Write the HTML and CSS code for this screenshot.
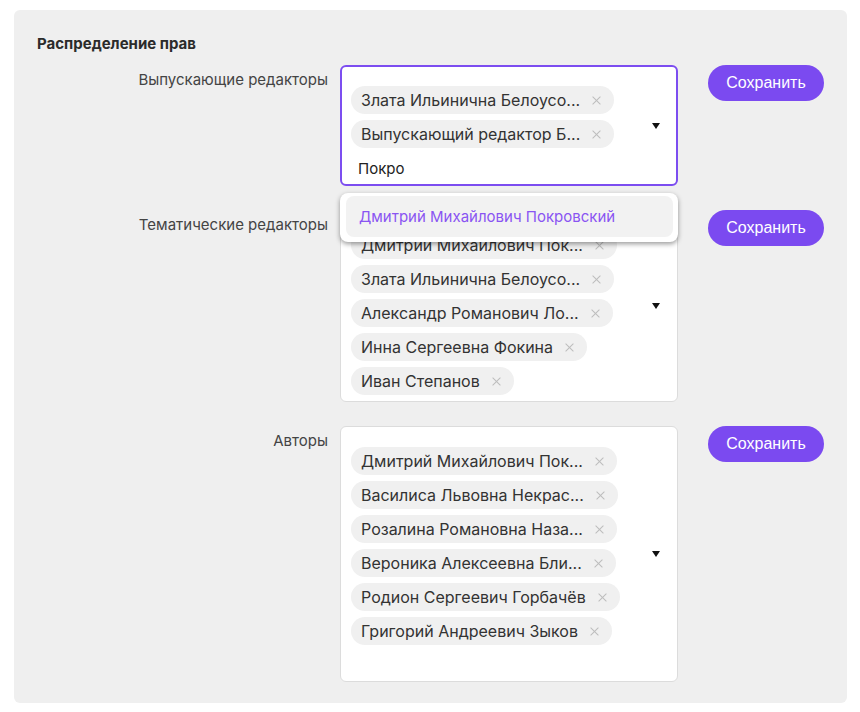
FILE: index.html
```html
<!DOCTYPE html>
<html lang="ru">
<head>
<meta charset="utf-8">
<title>Распределение прав</title>
<link rel="stylesheet" href="styles.css">
</head>
<body>
<section class="card">
  <h2 class="title">Распределение прав</h2>

  <div class="row">
    <div class="label">Выпускающие редакторы</div>
    <div class="field">
      <div class="select focused">
        <div class="values">
          <span class="chip"><span class="chip-text">Злата Ильинична Белоусо...</span><span class="x"></span></span>
          <span class="chip"><span class="chip-text">Выпускающий редактор Б...</span><span class="x"></span></span>
          <div class="input">Покро</div>
        </div>
        <span class="caret"></span>
      </div>
      <div class="menu">
        <div class="option">Дмитрий Михайлович Покровский</div>
      </div>
    </div>
    <button class="save">Сохранить</button>
  </div>

  <div class="row">
    <div class="label">Тематические редакторы</div>
    <div class="field">
      <div class="select">
        <div class="values">
          <span class="chip"><span class="chip-text">Дмитрий Михайлович Пок...</span><span class="x"></span></span>
          <span class="chip"><span class="chip-text">Злата Ильинична Белоусо...</span><span class="x"></span></span>
          <span class="chip"><span class="chip-text">Александр Романович Ло...</span><span class="x"></span></span>
          <span class="chip"><span class="chip-text">Инна Сергеевна Фокина</span><span class="x"></span></span>
          <span class="chip"><span class="chip-text">Иван Степанов</span><span class="x"></span></span>
        </div>
        <span class="caret"></span>
      </div>
    </div>
    <button class="save">Сохранить</button>
  </div>

  <div class="row">
    <div class="label">Авторы</div>
    <div class="field">
      <div class="select">
        <div class="values">
          <span class="chip"><span class="chip-text">Дмитрий Михайлович Пок...</span><span class="x"></span></span>
          <span class="chip"><span class="chip-text">Василиса Львовна Некрас...</span><span class="x"></span></span>
          <span class="chip"><span class="chip-text">Розалина Романовна Наза...</span><span class="x"></span></span>
          <span class="chip"><span class="chip-text">Вероника Алексеевна Бли...</span><span class="x"></span></span>
          <span class="chip"><span class="chip-text">Родион Сергеевич Горбачёв</span><span class="x"></span></span>
          <span class="chip"><span class="chip-text">Григорий Андреевич Зыков</span><span class="x"></span></span>
          <div class="input"></div>
        </div>
        <span class="caret"></span>
      </div>
    </div>
    <button class="save">Сохранить</button>
  </div>
</section>
</body>
</html>
```

FILE: styles.css
```css
* { box-sizing: border-box; }

html, body { background: #ffffff; }

body {
  margin: 0;
  padding: 10px 13px 0 14px;
  font-family: Inter, "Noto Sans", sans-serif;
  color: #333;
}

.card {
  width: 833px;
  height: 693px;
  background: #efefef;
  border-radius: 6px;
  padding: 24px 23px 23px 23px;
}

.title {
  margin: 0 0 11px 0;
  font-size: 15px;
  line-height: 20px;
  font-weight: 700;
  color: #2b2b2b;
}

.row {
  display: grid;
  grid-template-columns: 291px 338px 134px;
  column-gap: 12px;
  align-items: start;
  margin-bottom: 24px;
}

.label {
  text-align: right;
  font-size: 15px;
  line-height: 20px;
  padding-top: 5px;
  color: #444;
}

.field { position: relative; }

.select {
  display: flex;
  align-items: center;
  background: #fff;
  border: 1px solid #dcdcdc;
  border-radius: 6px;
  padding: 0 17px 0 10px;
}

.select.focused {
  border: 2px solid #7c4df0;
  padding: 0 16px 0 9px;
}

.values {
  flex: 1;
  display: flex;
  flex-direction: column;
  align-items: flex-start;
  padding-top: 20px;
}

.focused .values { padding-top: 19px; }

.chip {
  display: inline-flex;
  align-items: center;
  height: 28px;
  margin-bottom: 6px;
  padding: 0 13px 0 10px;
  background: #f0f0f0;
  border-radius: 14px;
  font-size: 16px;
  color: #333;
  white-space: nowrap;
}

.x {
  position: relative;
  width: 9px;
  height: 9px;
  margin-left: 12px;
  flex: none;
}
.x::before, .x::after {
  content: "";
  position: absolute;
  left: -1px;
  top: 4px;
  width: 11px;
  height: 1px;
  background: #bdbdbd;
  transform: rotate(45deg);
}
.x::after { transform: rotate(-45deg); }

.input {
  height: 30px;
  line-height: 30px;
  padding-left: 7px;
  font-size: 15px;
  color: #222;
}

.caret {
  flex: none;
  width: 0;
  height: 0;
  border-left: 4.5px solid transparent;
  border-right: 4.5px solid transparent;
  border-top: 6px solid #111;
  margin-left: 8px;
}

.menu {
  position: absolute;
  left: 0;
  right: 0;
  top: 128px;
  background: #fff;
  border-radius: 8px;
  box-shadow: 0 2px 5px rgba(0, 0, 0, 0.4);
  padding: 3px 5px 5px 6px;
  z-index: 2;
}

.option {
  background: #f2f2f2;
  border-radius: 8px;
  height: 41px;
  line-height: 41px;
  padding-left: 13px;
  font-size: 15px;
  color: #8a55f2;
}

.save {
  justify-self: end;
  width: 116px;
  height: 36px;
  padding: 0;
  border: none;
  border-radius: 18px;
  background: #7b4af0;
  color: #fff;
  font-family: "Liberation Sans", Arial, sans-serif;
  font-size: 16px;
  cursor: pointer;
}
```
